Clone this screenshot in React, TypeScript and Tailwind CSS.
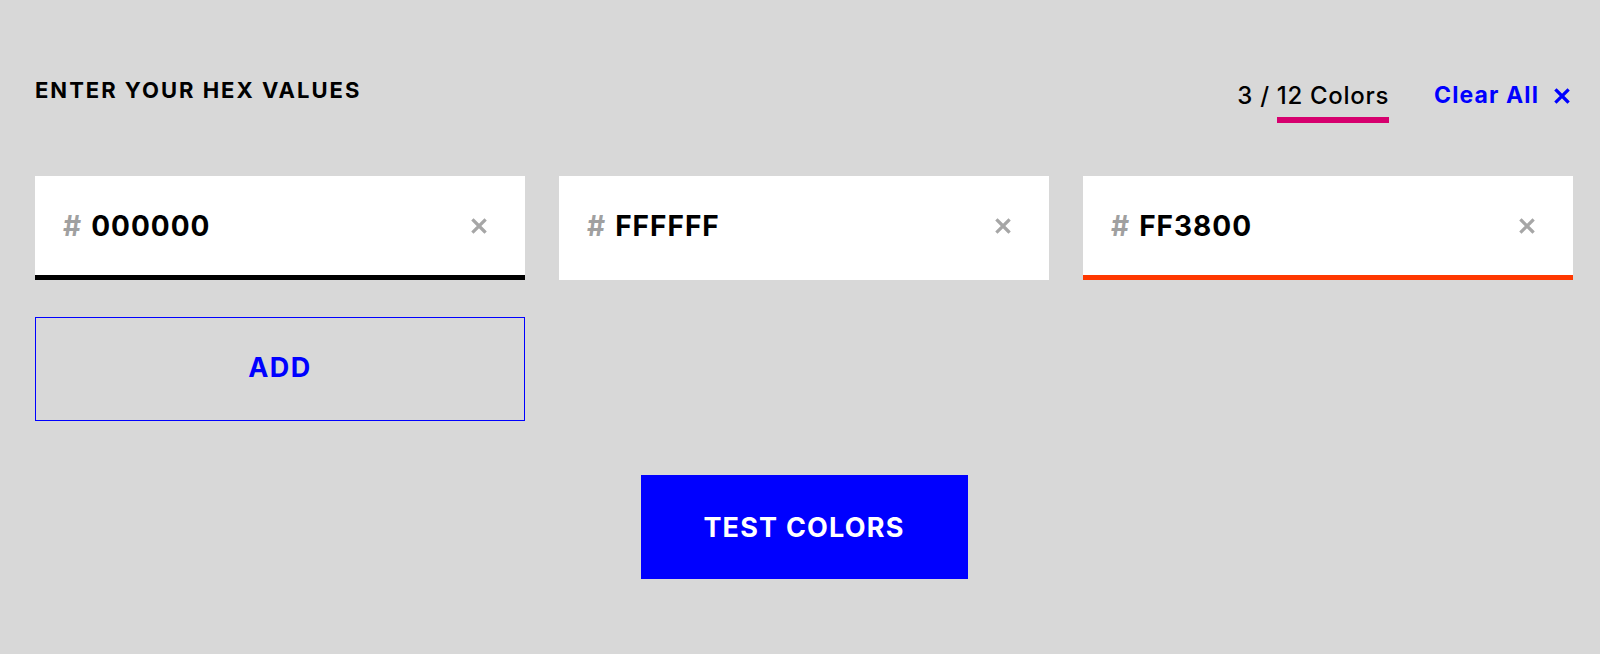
import React from 'react';

const FONT = { fontFamily: 'Inter, "Liberation Sans", sans-serif' };

const colors = [
  { hex: '000000', border: 'border-[#000000]' },
  { hex: 'FFFFFF', border: 'border-[#ffffff]' },
  { hex: 'FF3800', border: 'border-[#ff3800]' },
];

const Cross: React.FC<{ className?: string }> = ({ className }) => (
  <svg viewBox="0 0 16 16" className={className} fill="none" stroke="currentColor" strokeWidth={3.2} strokeLinecap="square">
    <path d="M2.5 2.5 L13.5 13.5 M13.5 2.5 L2.5 13.5" />
  </svg>
);

const App: React.FC = () => {
  return (
    <div className="min-h-screen bg-[#d8d8d8] pl-[35px] pr-[27px] text-black" style={FONT}>
      {/* header */}
      <div className="h-[176px] pt-[79px] flex justify-between items-start">
        <h1 className="text-[22px] leading-none font-bold tracking-[2px]">ENTER YOUR HEX VALUES</h1>
        <div className="flex items-start mt-[5px] mr-[3px]">
          <div className="text-[24px] leading-none font-medium tracking-[0.7px]">
            3 / <span className="inline-block pb-[9px] border-b-[6px] border-[#d6006e]">12 Colors</span>
          </div>
          <button className="ml-[45px] flex items-center gap-[15px] text-[23px] leading-none font-bold tracking-[1.1px] text-[#0000ff]">
            Clear All
            <Cross className="w-[16px] h-[16px]" />
          </button>
        </div>
      </div>

      {/* hex inputs */}
      <div className="grid grid-cols-3 gap-[34px]">
        {colors.map((c) => (
          <div
            key={c.hex}
            className={`h-[104px] bg-white border-b-[5px] ${c.border} flex items-center pl-[28px] pr-[38px]`}
          >
            <span className="text-[28px] leading-none font-bold text-[#a0a0a0]">#</span>
            <span className="ml-[10px] text-[28px] leading-none font-bold tracking-[1px]">{c.hex}</span>
            <Cross className="ml-auto w-[16px] h-[16px] text-[#a6a6a6]" />
          </div>
        ))}
      </div>

      <button className="mt-[37px] w-[490px] h-[104px] border border-[#0000ff] text-[#0000ff] text-[27px] leading-none font-bold tracking-[1.5px] flex items-center justify-center pb-[4px]">
        ADD
      </button>

      <div className="mt-[54px] flex justify-center">
        <button className="w-[327px] h-[104px] bg-[#0000ff] text-white text-[27px] leading-none font-bold tracking-[1.2px] flex items-center justify-center">
          TEST COLORS
        </button>
      </div>
    </div>
  );
};

export default App;
